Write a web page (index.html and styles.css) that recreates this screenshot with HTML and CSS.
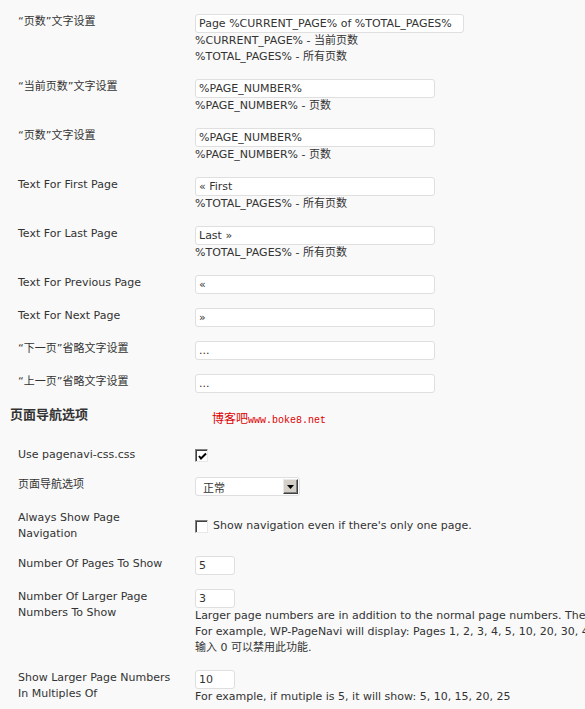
FILE: index.html
```html
<!DOCTYPE html>
<html lang="zh">
<head>
    <meta charset="UTF-8">
    <title>PageNavi Options</title>
    <link rel="stylesheet" href="styles.css">
</head>
<body>
    <div class="wrap">
        <div class="row">
            <div class="label">“页数”文字设置</div>
            <div class="field">
                <input class="text w-xl" type="text" value="Page %CURRENT_PAGE% of %TOTAL_PAGES%">
                <div class="desc">%CURRENT_PAGE% - 当前页数</div>
                <div class="desc">%TOTAL_PAGES% - 所有页数</div>
            </div>
        </div>
        <div class="row">
            <div class="label">“当前页数”文字设置</div>
            <div class="field">
                <input class="text w-l" type="text" value="%PAGE_NUMBER%">
                <div class="desc">%PAGE_NUMBER% - 页数</div>
            </div>
        </div>
        <div class="row">
            <div class="label">“页数”文字设置</div>
            <div class="field">
                <input class="text w-l" type="text" value="%PAGE_NUMBER%">
                <div class="desc">%PAGE_NUMBER% - 页数</div>
            </div>
        </div>
        <div class="row">
            <div class="label">Text For First Page</div>
            <div class="field">
                <input class="text w-l" type="text" value="« First">
                <div class="desc">%TOTAL_PAGES% - 所有页数</div>
            </div>
        </div>
        <div class="row">
            <div class="label">Text For Last Page</div>
            <div class="field">
                <input class="text w-l" type="text" value="Last »">
                <div class="desc">%TOTAL_PAGES% - 所有页数</div>
            </div>
        </div>
        <div class="row">
            <div class="label">Text For Previous Page</div>
            <div class="field">
                <input class="text w-l" type="text" value="«">
            </div>
        </div>
        <div class="row">
            <div class="label">Text For Next Page</div>
            <div class="field">
                <input class="text w-l" type="text" value="»">
            </div>
        </div>
        <div class="row">
            <div class="label">“下一页”省略文字设置</div>
            <div class="field">
                <input class="text w-l" type="text" value="...">
            </div>
        </div>
        <div class="row">
            <div class="label">“上一页”省略文字设置</div>
            <div class="field">
                <input class="text w-l" type="text" value="...">
            </div>
        </div>

        <div class="section-head">
            <h3>页面导航选项</h3>
            <span class="mark">博客吧<span class="mark-url">www.boke8.net</span></span>
        </div>

        <div class="row">
            <div class="label">Use pagenavi-css.css</div>
            <div class="field">
                <span class="check on">
                    <svg width="9" height="9" viewBox="0 0 9 9"><path d="M1 4 L3 6.5 L8 1.5" fill="none" stroke="#000" stroke-width="2"/></svg>
                </span>
            </div>
        </div>
        <div class="row">
            <div class="label">页面导航选项</div>
            <div class="field">
                <div class="select">
                    <span class="select-value">正常</span>
                    <span class="select-btn">
                        <svg width="7" height="4" viewBox="0 0 7 4"><path d="M0 0 H7 L3.5 4 Z" fill="#000"/></svg>
                    </span>
                </div>
            </div>
        </div>
        <div class="row">
            <div class="label">Always Show Page Navigation</div>
            <div class="field option">
                <span class="check"></span>
                <span>Show navigation even if there's only one page.</span>
            </div>
        </div>
        <div class="row">
            <div class="label">Number Of Pages To Show</div>
            <div class="field">
                <input class="text w-s" type="text" value="5">
            </div>
        </div>
        <div class="row">
            <div class="label">Number Of Larger Page Numbers To Show</div>
            <div class="field">
                <input class="text w-s" type="text" value="3">
                <div class="desc">Larger page numbers are in addition to the normal page numbers. They are useful when there are many pages of posts.</div>
                <div class="desc">For example, WP-PageNavi will display: Pages 1, 2, 3, 4, 5, 10, 20, 30, 40, 50.</div>
                <div class="desc">输入 0 可以禁用此功能.</div>
            </div>
        </div>
        <div class="row">
            <div class="label">Show Larger Page Numbers In Multiples Of</div>
            <div class="field">
                <input class="text w-s" type="text" value="10">
                <div class="desc">For example, if mutiple is 5, it will show: 5, 10, 15, 20, 25</div>
            </div>
        </div>
    </div>
</body>
</html>
```

FILE: styles.css
```css
html {
    overflow: hidden;
}
body {
    margin: 0;
    background: #f9f9f9;
    color: #333;
    font-family: "DejaVu Sans", Verdana, "Noto Sans CJK SC", sans-serif;
    font-size: 11px;
    line-height: 16px;
}
.wrap {
    padding-top: 14px;
}
.row {
    display: flex;
    align-items: flex-start;
    padding-left: 18px;
    margin-bottom: 14px;
}
.label {
    width: 160px;
    padding-right: 17px;
    flex-shrink: 0;
}
.field {
    min-width: 0;
}
.text {
    display: block;
    box-sizing: border-box;
    height: 19px;
    margin: 0;
    padding: 0 3px;
    border: 1px solid #dfdfdf;
    border-radius: 3px;
    background: #fff;
    color: #333;
    font-family: "DejaVu Sans", Verdana, "Noto Sans CJK SC", sans-serif;
    font-size: 11px;
    outline: none;
}
.w-xl {
    width: 269px;
}
.w-l {
    width: 240px;
}
.w-s {
    width: 40px;
}
.desc {
    white-space: nowrap;
}
.section-head {
    display: flex;
    align-items: flex-start;
    padding-left: 10px;
    margin-bottom: 18px;
}
.section-head h3 {
    width: 202px;
    margin: 0;
    font-size: 13px;
    line-height: 16px;
    font-weight: bold;
    color: #333;
}
.mark {
    padding-top: 3px;
    color: #dd0000;
    font-family: "Noto Sans CJK SC", serif;
    font-size: 12px;
    line-height: 16px;
}
.mark-url {
    font-family: "Liberation Mono", monospace;
    font-size: 10px;
}
.check {
    display: flex;
    align-items: center;
    justify-content: center;
    box-sizing: border-box;
    width: 13px;
    height: 13px;
    margin-top: 2px;
    background: #fff;
    border: 1px solid;
    border-color: #808080 #e8e8e8 #e8e8e8 #808080;
    box-shadow: inset 1px 1px 0 #404040;
}
.check svg {
    margin: 1px 0 0 1px;
}
.select {
    display: flex;
    align-items: center;
    justify-content: space-between;
    box-sizing: border-box;
    width: 105px;
    height: 19px;
    padding: 0 1px 0 7px;
    background: #fff;
    border: 1px solid #dfdfdf;
    border-radius: 3px;
    font-family: "Noto Sans CJK SC", sans-serif;
    font-size: 11px;
}
.select-btn {
    display: flex;
    align-items: center;
    justify-content: center;
    box-sizing: border-box;
    width: 15px;
    height: 15px;
    background: #d4d0c8;
    border: 1px solid;
    border-color: #e8e8e8 #404040 #404040 #e8e8e8;
    box-shadow: inset -1px -1px 0 #808080;
}
.option {
    display: flex;
    align-items: center;
    gap: 5px;
    margin-top: 8px;
}
.option .check {
    margin-top: 0;
}
```
